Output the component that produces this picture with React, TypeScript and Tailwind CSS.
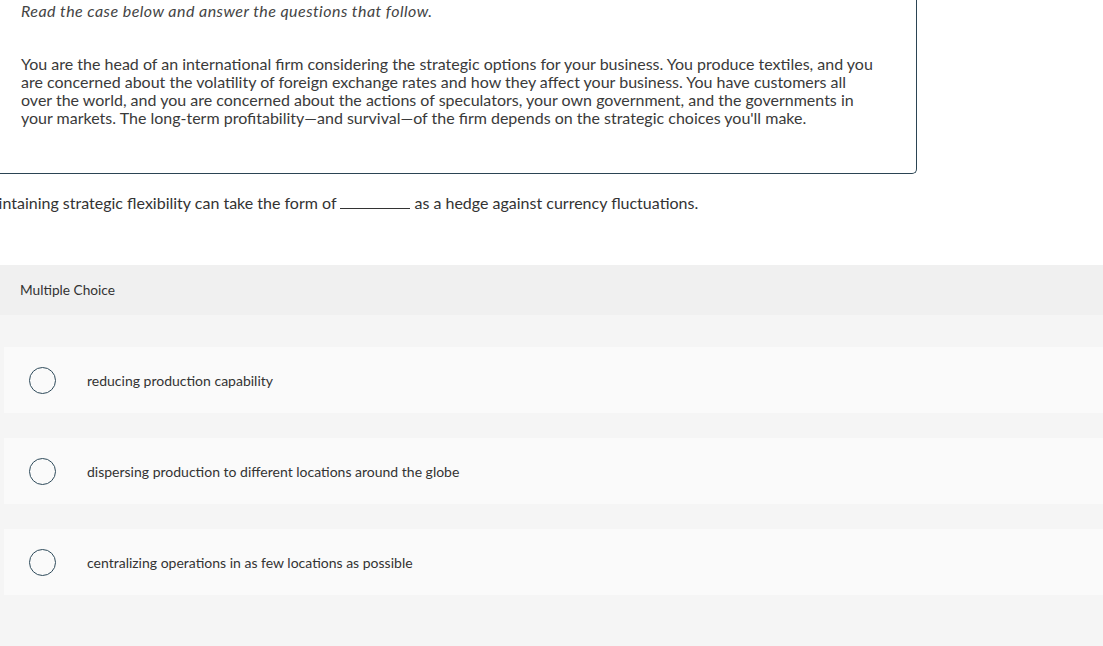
const options = [
  'reducing production capability',
  'dispersing production to different locations around the globe',
  'centralizing operations in as few locations as possible',
];

export default function App() {
  return (
    <div className="min-h-[646px] w-[1103px] overflow-hidden bg-white font-['Lato',sans-serif] text-[#333]">
      <div className="h-[174px] w-[917px] rounded-br-[5px] border-r border-b border-[#2b4453] pl-[21px]">
        <p className="pt-[2px] text-[16px] leading-[18px] tracking-[0.45px] text-[#444] italic">
          Read the case below and answer the questions that follow.
        </p>
        <p className="mt-[35px] w-[856px] text-[16px] leading-[18px] text-[#3a3a3a]">
          You are the head of an international firm considering the strategic options for your business. You produce
          textiles, and you are concerned about the volatility of foreign exchange rates and how they affect your
          business. You have customers all over the world, and you are concerned about the actions of speculators, your
          own government, and the governments in your markets. The long-term profitability—and survival—of the firm
          depends on the strategic choices you'll make.
        </p>
      </div>

      <p className="-ml-[24px] mt-[20px] h-[71px] text-[16px] leading-[18px] whitespace-nowrap text-[#333]">
        Maintaining strategic flexibility can take the form of{' '}
        <span className="inline-block w-[70px] border-b border-[#333] align-baseline" /> as a hedge against currency
        fluctuations.
      </p>

      <div className="bg-[#f5f5f5] pb-[60px]">
        <div className="flex h-[50px] items-center bg-[#f0f0f0] pl-[20px] text-[13.7px] text-[#333]">
          Multiple Choice
        </div>
        <div className="flex flex-col gap-[25px] pt-[32px] pl-[4px]">
          {options.map((o) => (
            <div key={o} className="flex h-[66px] items-center bg-[#fafafa]">
              <span className="ml-[25px] h-[27px] w-[27px] rounded-full border-[1.5px] border-[#2e4a5a]" />
              <span className="ml-[31px] text-[14px] text-[#333]">{o}</span>
            </div>
          ))}
        </div>
      </div>
    </div>
  );
}
